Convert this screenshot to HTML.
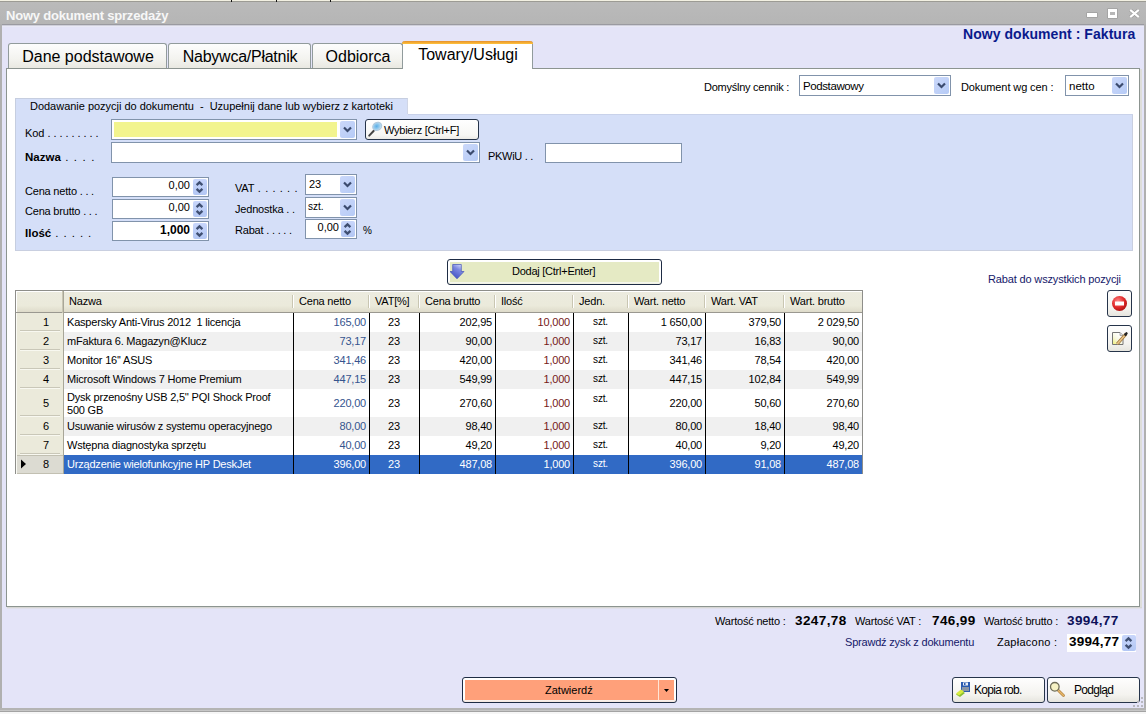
<!DOCTYPE html>
<html><head><meta charset="utf-8">
<style>
*{box-sizing:border-box;margin:0;padding:0}
html,body{width:1146px;height:714px;overflow:hidden;background:#e4e4f8;font-family:"Liberation Sans",sans-serif;font-size:11px;color:#000}
.a{position:absolute}
.t{position:absolute;white-space:pre;line-height:1}
.tab{position:absolute;top:43px;height:26px;border:1px solid #919b9c;border-bottom:none;border-radius:3px 3px 0 0;background:linear-gradient(#fdfdfd,#f3f3ef 60%,#e8e7e0);font-size:16px;text-align:center;line-height:25px;padding-left:1px}
.tab.act{top:41px;height:28px;background:#fff;border-top:none;line-height:28px}
.tab.act:before{content:"";position:absolute;left:-1px;right:-1px;top:0;height:3px;background:linear-gradient(#e58f2c,#ffc43c);border-radius:3px 3px 0 0}
.inp{position:absolute;background:#fff;border:1px solid #8193ab}
.dd{position:absolute;width:15px;border-radius:2px;background:linear-gradient(135deg,#cbd8fa,#b6cbf6)}
.dd svg{position:absolute;left:3px;top:5px}
.spin{position:absolute;width:14px;border-radius:2px;background:linear-gradient(#c8d6fb,#b3c7f4)}
.btn{position:absolute;border:1px solid #26344a;border-radius:3px;background:linear-gradient(#fefefe,#f4f3ef 70%,#e6e5de)}
.c{position:absolute;top:0;white-space:pre;line-height:1;letter-spacing:-0.2px}
</style></head><body>
<div class="a" style="left:0px;top:0px;width:1146px;height:1px;background:#f2f0e2"></div>
<div class="a" style="left:0px;top:1px;width:1146px;height:1px;background:#9c9b94"></div>
<div class="a" style="left:231px;top:0px;width:1px;height:2px;background:#111"></div>
<div class="a" style="left:276px;top:0px;width:1px;height:2px;background:#111"></div>
<div class="a" style="left:330px;top:0px;width:1px;height:2px;background:#111"></div>
<div class="a" style="left:0px;top:2px;width:1146px;height:22px;background:linear-gradient(#bababa,#b5b5b5)"></div>
<div class="a" style="left:0px;top:24px;width:1146px;height:1px;background:#9a9aa0"></div>
<div class="a" style="left:0px;top:25px;width:1146px;height:1px;background:#cfcfdb"></div>
<div class="a" style="left:0px;top:26px;width:1146px;height:1px;background:#e9e9f6"></div>
<div class="t" style="left:6px;top:9px;font-size:13px;font-weight:bold;color:#f7f7f7;letter-spacing:-0.2px">Nowy dokument sprzedaży</div>
<div class="a" style="left:1087px;top:13px;width:10px;height:4px;background:#fff;box-shadow:0 0 0 0.5px rgba(110,110,110,0.5)"></div>
<div class="a" style="left:1108px;top:9px;width:9px;height:9px;border:2px solid #fff;border-top-width:3px;border-bottom-width:3px;box-shadow:0 0 0 0.5px rgba(110,110,110,0.5)"></div>
<svg class="a" style="left:1129px;top:9px" width="11" height="9" viewBox="0 0 11 9"><path d="M1.2 0.8 L9.8 8.2 M9.8 0.8 L1.2 8.2" stroke="#8a8a8a" stroke-width="3.2"/><path d="M1.2 0.8 L9.8 8.2 M9.8 0.8 L1.2 8.2" stroke="#fff" stroke-width="2.2"/></svg>
<div class="a" style="left:0px;top:24px;width:2px;height:690px;background:#b0b0b0"></div>
<div class="a" style="left:1144px;top:24px;width:2px;height:690px;background:#b0b0b0"></div>
<div class="a" style="left:1140px;top:69px;width:2px;height:538px;background:#dededa"></div>
<div class="a" style="left:0px;top:708px;width:1146px;height:2px;background:#b4b4b4"></div>
<div class="a" style="left:0px;top:710px;width:1146px;height:1px;background:#c6c6c6"></div>
<div class="a" style="left:0px;top:711px;width:1146px;height:1px;background:#a3a3a3"></div>
<div class="a" style="left:0px;top:712px;width:1146px;height:2px;background:#f6f6f6"></div>
<div class="t" style="left:963px;top:27px;font-size:14px;font-weight:bold;color:#0a1a8c;letter-spacing:0.05px">Nowy dokument : Faktura</div>
<div class="tab" style="left:8px;width:159px">Dane podstawowe</div>
<div class="tab" style="left:168px;width:143px;letter-spacing:-0.25px">Nabywca/Płatnik</div>
<div class="tab" style="left:312px;width:91px">Odbiorca</div>
<div class="a" style="left:6px;top:68px;width:1134px;height:539px;background:#fff;border:1px solid #8c9490"></div>
<div class="a" style="left:7px;top:607px;width:1135px;height:1px;background:#d6d6d4"></div>
<div class="a" style="left:7px;top:608px;width:1135px;height:1px;background:#e0e0ea"></div>
<div class="tab act" style="left:402px;width:131px">Towary/Usługi</div>
<div class="t" style="left:704px;top:82px;letter-spacing:-0.25px">Domyślny cennik :</div>
<div class="inp" style="left:799px;top:75px;width:152px;height:21px"></div>
<div class="t" style="left:803px;top:81px;font-size:11.5px;letter-spacing:-0.4px">Podstawowy</div>
<div class="dd" style="left:934px;top:77px;height:17px"><svg width="9" height="7" viewBox="0 0 9 7"><path d="M1 1.5 L4.5 5 L8 1.5" fill="none" stroke="#3b4b6e" stroke-width="2.2"/></svg></div>
<div class="t" style="left:961px;top:82px;letter-spacing:-0.1px">Dokument wg cen :</div>
<div class="inp" style="left:1065px;top:75px;width:64px;height:21px"></div>
<div class="t" style="left:1069px;top:81px;font-size:11.5px">netto</div>
<div class="dd" style="left:1112px;top:77px;height:17px"><svg width="9" height="7" viewBox="0 0 9 7"><path d="M1 1.5 L4.5 5 L8 1.5" fill="none" stroke="#3b4b6e" stroke-width="2.2"/></svg></div>
<div class="a" style="left:15px;top:98px;width:393px;height:17px;background:#d5dff8;border-top:1px solid #c6cee0;border-left:1px solid #c6cee0;border-right:1px solid #d0d6e6"></div>
<div class="t" style="left:30px;top:101px;letter-spacing:-0.02px">Dodawanie pozycji do dokumentu  -  Uzupełnij dane lub wybierz z kartoteki</div>
<div class="a" style="left:15px;top:114px;width:1118px;height:137px;background:#d5dff8;border-bottom:1px solid #c9cfe0;border-right:1px solid #c9cfe0;border-left:1px solid #c6cee0"></div>
<div class="a" style="left:408px;top:114px;width:725px;height:1px;background:#c9d2ea"></div>
<div class="t" style="left:25px;top:128px;letter-spacing:-0.05px">Kod . . . . . . . . .</div>
<div class="inp" style="left:111px;top:119px;width:246px;height:21px"></div>
<div class="a" style="left:114px;top:122px;width:223px;height:15px;background:#f2f48e"></div>
<div class="dd" style="left:340px;top:121px;height:17px"><svg width="9" height="7" viewBox="0 0 9 7"><path d="M1 1.5 L4.5 5 L8 1.5" fill="none" stroke="#3b4b6e" stroke-width="2.2"/></svg></div>
<div class="btn" style="left:365px;top:119px;width:114px;height:21px;background:linear-gradient(#fff,#f7f7f4 80%,#ecebe6)"></div>
<svg class="a" style="left:367px;top:121px" width="18" height="17" viewBox="0 0 18 17"><defs><radialGradient id="gl" cx="0.45" cy="0.45" r="0.6"><stop offset="0" stop-color="#5aaee6"/><stop offset="0.7" stop-color="#a8d4f0"/><stop offset="1" stop-color="#d8ecf8"/></radialGradient></defs><path d="M2.2 14.6 L6.8 9.8" stroke="#444" stroke-width="2" stroke-linecap="round"/><ellipse cx="10.2" cy="5.4" rx="4.6" ry="3.9" transform="rotate(-30 10.2 5.4)" fill="url(#gl)" stroke="#b0c8dc" stroke-width="1.2"/></svg>
<div class="t" style="left:384px;top:125px;letter-spacing:-0.25px">Wybierz [Ctrl+F]</div>
<div class="t" style="left:25px;top:152px;font-size:11.5px"><b>Nazwa</b><span style="letter-spacing:1.15px"> . . . .</span></div>
<div class="inp" style="left:111px;top:142px;width:369px;height:21px"></div>
<div class="dd" style="left:463px;top:144px;height:17px"><svg width="9" height="7" viewBox="0 0 9 7"><path d="M1 1.5 L4.5 5 L8 1.5" fill="none" stroke="#3b4b6e" stroke-width="2.2"/></svg></div>
<div class="t" style="left:488px;top:151px;letter-spacing:-0.3px">PKWiU . .</div>
<div class="inp" style="left:545px;top:143px;width:137px;height:20px"></div>
<div class="t" style="left:25px;top:186px;letter-spacing:-0.2px">Cena netto . . .</div>
<div class="t" style="left:25px;top:206px;letter-spacing:-0.2px">Cena brutto . . .</div>
<div class="t" style="left:25px;top:228px;font-size:11.5px"><b>Ilość</b><span style="letter-spacing:0.9px"> . . . . .</span></div>
<div class="inp" style="left:112px;top:177px;width:97px;height:20px"></div>
<div class="inp" style="left:112px;top:199px;width:97px;height:20px"></div>
<div class="inp" style="left:112px;top:221px;width:97px;height:20px"></div>
<div class="t" style="left:140px;top:180px;width:50px;text-align:right">0,00</div>
<div class="t" style="left:140px;top:202px;width:50px;text-align:right">0,00</div>
<div class="t" style="left:140px;top:224px;width:50px;text-align:right;font-weight:bold;font-size:12px">1,000</div>
<div class="spin" style="left:193px;top:179px;height:16px"><svg class="a" style="left:2px;top:1px" width="9" height="14" viewBox="0 0 9 14"><path d="M1.6 5.2 L4.5 2.4 L7.4 5.2 M1.6 8.8 L4.5 11.6 L7.4 8.8" fill="none" stroke="#3f4f72" stroke-width="2.3"/></svg></div>
<div class="spin" style="left:193px;top:201px;height:16px"><svg class="a" style="left:2px;top:1px" width="9" height="14" viewBox="0 0 9 14"><path d="M1.6 5.2 L4.5 2.4 L7.4 5.2 M1.6 8.8 L4.5 11.6 L7.4 8.8" fill="none" stroke="#3f4f72" stroke-width="2.3"/></svg></div>
<div class="spin" style="left:193px;top:223px;height:16px"><svg class="a" style="left:2px;top:1px" width="9" height="14" viewBox="0 0 9 14"><path d="M1.6 5.2 L4.5 2.4 L7.4 5.2 M1.6 8.8 L4.5 11.6 L7.4 8.8" fill="none" stroke="#3f4f72" stroke-width="2.3"/></svg></div>
<div class="t" style="left:235px;top:183px;letter-spacing:-0.2px">VAT<span style="letter-spacing:0.6px"> . . . . . .</span></div>
<div class="t" style="left:235px;top:204px;letter-spacing:-0.2px">Jednostka . .</div>
<div class="t" style="left:235px;top:225px;letter-spacing:-0.2px">Rabat . . . . .</div>
<div class="inp" style="left:305px;top:174px;width:52px;height:21px"></div>
<div class="t" style="left:309px;top:179px;">23</div>
<div class="dd" style="left:340px;top:176px;height:17px"><svg width="9" height="7" viewBox="0 0 9 7"><path d="M1 1.5 L4.5 5 L8 1.5" fill="none" stroke="#3b4b6e" stroke-width="2.2"/></svg></div>
<div class="inp" style="left:305px;top:197px;width:52px;height:21px"></div>
<div class="t" style="left:308px;top:202px;font-size:10px">szt.</div>
<div class="dd" style="left:340px;top:199px;height:17px"><svg width="9" height="7" viewBox="0 0 9 7"><path d="M1 1.5 L4.5 5 L8 1.5" fill="none" stroke="#3b4b6e" stroke-width="2.2"/></svg></div>
<div class="inp" style="left:305px;top:219px;width:52px;height:20px"></div>
<div class="t" style="left:300px;top:222px;width:39px;text-align:right">0,00</div>
<div class="spin" style="left:341px;top:221px;height:16px"><svg class="a" style="left:2px;top:1px" width="9" height="14" viewBox="0 0 9 14"><path d="M1.6 5.2 L4.5 2.4 L7.4 5.2 M1.6 8.8 L4.5 11.6 L7.4 8.8" fill="none" stroke="#3f4f72" stroke-width="2.3"/></svg></div>
<div class="t" style="left:363px;top:226px;font-size:10px">%</div>
<div class="a" style="left:15px;top:290px;width:848px;height:184px;border:1px solid #8e8e8a;border-bottom:none;background:#fff;overflow:hidden">
<div class="a" style="left:0px;top:0px;width:848px;height:21px;background:linear-gradient(#ecebdf,#ebeadb 70%,#dedbca)"></div>
<div class="a" style="left:0px;top:21px;width:848px;height:1px;background:#9a9890"></div>
<div class="a" style="left:0px;top:0px;width:847px;height:1px;background:#fff"></div>
<div class="a" style="left:46px;top:0px;width:1px;height:22px;background:#c9c6b4"></div>
<div class="a" style="left:47px;top:0px;width:1px;height:22px;background:#a8a698"></div>
<div class="c" style="left:53px;top:5px">Nazwa</div>
<div class="a" style="left:276px;top:4px;width:1px;height:13px;background:#c9c6b2"></div>
<div class="a" style="left:277px;top:4px;width:1px;height:13px;background:#fff"></div>
<div class="c" style="left:283px;top:5px">Cena netto</div>
<div class="a" style="left:352px;top:4px;width:1px;height:13px;background:#c9c6b2"></div>
<div class="a" style="left:353px;top:4px;width:1px;height:13px;background:#fff"></div>
<div class="c" style="left:359px;top:5px">VAT[%]</div>
<div class="a" style="left:402px;top:4px;width:1px;height:13px;background:#c9c6b2"></div>
<div class="a" style="left:403px;top:4px;width:1px;height:13px;background:#fff"></div>
<div class="c" style="left:409px;top:5px">Cena brutto</div>
<div class="a" style="left:478px;top:4px;width:1px;height:13px;background:#c9c6b2"></div>
<div class="a" style="left:479px;top:4px;width:1px;height:13px;background:#fff"></div>
<div class="c" style="left:485px;top:5px">Ilość</div>
<div class="a" style="left:556px;top:4px;width:1px;height:13px;background:#c9c6b2"></div>
<div class="a" style="left:557px;top:4px;width:1px;height:13px;background:#fff"></div>
<div class="c" style="left:563px;top:5px">Jedn.</div>
<div class="a" style="left:611px;top:4px;width:1px;height:13px;background:#c9c6b2"></div>
<div class="a" style="left:612px;top:4px;width:1px;height:13px;background:#fff"></div>
<div class="c" style="left:618px;top:5px">Wart. netto</div>
<div class="a" style="left:688px;top:4px;width:1px;height:13px;background:#c9c6b2"></div>
<div class="a" style="left:689px;top:4px;width:1px;height:13px;background:#fff"></div>
<div class="c" style="left:695px;top:5px">Wart. VAT</div>
<div class="a" style="left:767px;top:4px;width:1px;height:13px;background:#c9c6b2"></div>
<div class="a" style="left:768px;top:4px;width:1px;height:13px;background:#fff"></div>
<div class="c" style="left:774px;top:5px">Wart. brutto</div>
<div class="a" style="left:0px;top:22px;width:47px;height:19px;background:#ebeadb"></div>
<div class="a" style="left:4px;top:39px;width:40px;height:1px;background:#c9c7b8"></div>
<div class="a" style="left:4px;top:40px;width:40px;height:1px;background:#f8f8f0"></div>
<div class="a" style="left:47px;top:22px;width:800px;height:19px;background:#fff"></div>
<div class="c" style="left:0;top:26px;width:33px;text-align:right">1</div>
<div class="c" style="left:51px;top:26px;color:#000">Kaspersky Anti-Virus 2012  1 licencja</div>
<div class="c" style="left:277px;top:26px;width:73px;text-align:right;color:#35548e">165,00</div>
<div class="c" style="left:353px;top:26px;width:50px;text-align:center;color:#000">23</div>
<div class="c" style="left:403px;top:26px;width:73px;text-align:right;color:#000">202,95</div>
<div class="c" style="left:479px;top:26px;width:75px;text-align:right;color:#761818">10,000</div>
<div class="c" style="left:557px;top:26px;width:55px;text-align:center;color:#000;font-size:10px">szt.</div>
<div class="c" style="left:612px;top:26px;width:74px;text-align:right;color:#000">1 650,00</div>
<div class="c" style="left:689px;top:26px;width:76px;text-align:right;color:#000">379,50</div>
<div class="c" style="left:768px;top:26px;width:75px;text-align:right;color:#000">2 029,50</div>
<div class="a" style="left:0px;top:41px;width:47px;height:19px;background:#ebeadb"></div>
<div class="a" style="left:4px;top:58px;width:40px;height:1px;background:#c9c7b8"></div>
<div class="a" style="left:4px;top:59px;width:40px;height:1px;background:#f8f8f0"></div>
<div class="a" style="left:47px;top:41px;width:800px;height:19px;background:#f0f0f0"></div>
<div class="c" style="left:0;top:45px;width:33px;text-align:right">2</div>
<div class="c" style="left:51px;top:45px;color:#000">mFaktura 6. Magazyn@Klucz</div>
<div class="c" style="left:277px;top:45px;width:73px;text-align:right;color:#35548e">73,17</div>
<div class="c" style="left:353px;top:45px;width:50px;text-align:center;color:#000">23</div>
<div class="c" style="left:403px;top:45px;width:73px;text-align:right;color:#000">90,00</div>
<div class="c" style="left:479px;top:45px;width:75px;text-align:right;color:#761818">1,000</div>
<div class="c" style="left:557px;top:45px;width:55px;text-align:center;color:#000;font-size:10px">szt.</div>
<div class="c" style="left:612px;top:45px;width:74px;text-align:right;color:#000">73,17</div>
<div class="c" style="left:689px;top:45px;width:76px;text-align:right;color:#000">16,83</div>
<div class="c" style="left:768px;top:45px;width:75px;text-align:right;color:#000">90,00</div>
<div class="a" style="left:0px;top:60px;width:47px;height:19px;background:#ebeadb"></div>
<div class="a" style="left:4px;top:77px;width:40px;height:1px;background:#c9c7b8"></div>
<div class="a" style="left:4px;top:78px;width:40px;height:1px;background:#f8f8f0"></div>
<div class="a" style="left:47px;top:60px;width:800px;height:19px;background:#fff"></div>
<div class="c" style="left:0;top:64px;width:33px;text-align:right">3</div>
<div class="c" style="left:51px;top:64px;color:#000">Monitor 16'' ASUS</div>
<div class="c" style="left:277px;top:64px;width:73px;text-align:right;color:#35548e">341,46</div>
<div class="c" style="left:353px;top:64px;width:50px;text-align:center;color:#000">23</div>
<div class="c" style="left:403px;top:64px;width:73px;text-align:right;color:#000">420,00</div>
<div class="c" style="left:479px;top:64px;width:75px;text-align:right;color:#761818">1,000</div>
<div class="c" style="left:557px;top:64px;width:55px;text-align:center;color:#000;font-size:10px">szt.</div>
<div class="c" style="left:612px;top:64px;width:74px;text-align:right;color:#000">341,46</div>
<div class="c" style="left:689px;top:64px;width:76px;text-align:right;color:#000">78,54</div>
<div class="c" style="left:768px;top:64px;width:75px;text-align:right;color:#000">420,00</div>
<div class="a" style="left:0px;top:79px;width:47px;height:19px;background:#ebeadb"></div>
<div class="a" style="left:4px;top:96px;width:40px;height:1px;background:#c9c7b8"></div>
<div class="a" style="left:4px;top:97px;width:40px;height:1px;background:#f8f8f0"></div>
<div class="a" style="left:47px;top:79px;width:800px;height:19px;background:#f0f0f0"></div>
<div class="c" style="left:0;top:83px;width:33px;text-align:right">4</div>
<div class="c" style="left:51px;top:83px;color:#000">Microsoft Windows 7 Home Premium</div>
<div class="c" style="left:277px;top:83px;width:73px;text-align:right;color:#35548e">447,15</div>
<div class="c" style="left:353px;top:83px;width:50px;text-align:center;color:#000">23</div>
<div class="c" style="left:403px;top:83px;width:73px;text-align:right;color:#000">549,99</div>
<div class="c" style="left:479px;top:83px;width:75px;text-align:right;color:#761818">1,000</div>
<div class="c" style="left:557px;top:83px;width:55px;text-align:center;color:#000;font-size:10px">szt.</div>
<div class="c" style="left:612px;top:83px;width:74px;text-align:right;color:#000">447,15</div>
<div class="c" style="left:689px;top:83px;width:76px;text-align:right;color:#000">102,84</div>
<div class="c" style="left:768px;top:83px;width:75px;text-align:right;color:#000">549,99</div>
<div class="a" style="left:0px;top:98px;width:47px;height:28px;background:#ebeadb"></div>
<div class="a" style="left:4px;top:124px;width:40px;height:1px;background:#c9c7b8"></div>
<div class="a" style="left:4px;top:125px;width:40px;height:1px;background:#f8f8f0"></div>
<div class="a" style="left:47px;top:98px;width:800px;height:28px;background:#fff"></div>
<div class="c" style="left:0;top:107px;width:33px;text-align:right">5</div>
<div class="c" style="left:51px;top:100px;color:#000;line-height:13px">Dysk przenośny USB 2,5'' PQI Shock Proof<br>500 GB</div>
<div class="c" style="left:277px;top:107px;width:73px;text-align:right;color:#35548e">220,00</div>
<div class="c" style="left:353px;top:107px;width:50px;text-align:center;color:#000">23</div>
<div class="c" style="left:403px;top:107px;width:73px;text-align:right;color:#000">270,60</div>
<div class="c" style="left:479px;top:107px;width:75px;text-align:right;color:#761818">1,000</div>
<div class="c" style="left:557px;top:103px;width:55px;text-align:center;color:#000;font-size:10px">szt.</div>
<div class="c" style="left:612px;top:107px;width:74px;text-align:right;color:#000">220,00</div>
<div class="c" style="left:689px;top:107px;width:76px;text-align:right;color:#000">50,60</div>
<div class="c" style="left:768px;top:107px;width:75px;text-align:right;color:#000">270,60</div>
<div class="a" style="left:0px;top:126px;width:47px;height:19px;background:#ebeadb"></div>
<div class="a" style="left:4px;top:143px;width:40px;height:1px;background:#c9c7b8"></div>
<div class="a" style="left:4px;top:144px;width:40px;height:1px;background:#f8f8f0"></div>
<div class="a" style="left:47px;top:126px;width:800px;height:19px;background:#f0f0f0"></div>
<div class="c" style="left:0;top:130px;width:33px;text-align:right">6</div>
<div class="c" style="left:51px;top:130px;color:#000">Usuwanie wirusów z systemu operacyjnego</div>
<div class="c" style="left:277px;top:130px;width:73px;text-align:right;color:#35548e">80,00</div>
<div class="c" style="left:353px;top:130px;width:50px;text-align:center;color:#000">23</div>
<div class="c" style="left:403px;top:130px;width:73px;text-align:right;color:#000">98,40</div>
<div class="c" style="left:479px;top:130px;width:75px;text-align:right;color:#761818">1,000</div>
<div class="c" style="left:557px;top:130px;width:55px;text-align:center;color:#000;font-size:10px">szt.</div>
<div class="c" style="left:612px;top:130px;width:74px;text-align:right;color:#000">80,00</div>
<div class="c" style="left:689px;top:130px;width:76px;text-align:right;color:#000">18,40</div>
<div class="c" style="left:768px;top:130px;width:75px;text-align:right;color:#000">98,40</div>
<div class="a" style="left:0px;top:145px;width:47px;height:19px;background:#ebeadb"></div>
<div class="a" style="left:4px;top:162px;width:40px;height:1px;background:#c9c7b8"></div>
<div class="a" style="left:4px;top:163px;width:40px;height:1px;background:#f8f8f0"></div>
<div class="a" style="left:47px;top:145px;width:800px;height:19px;background:#fff"></div>
<div class="c" style="left:0;top:149px;width:33px;text-align:right">7</div>
<div class="c" style="left:51px;top:149px;color:#000">Wstępna diagnostyka sprzętu</div>
<div class="c" style="left:277px;top:149px;width:73px;text-align:right;color:#35548e">40,00</div>
<div class="c" style="left:353px;top:149px;width:50px;text-align:center;color:#000">23</div>
<div class="c" style="left:403px;top:149px;width:73px;text-align:right;color:#000">49,20</div>
<div class="c" style="left:479px;top:149px;width:75px;text-align:right;color:#761818">1,000</div>
<div class="c" style="left:557px;top:149px;width:55px;text-align:center;color:#000;font-size:10px">szt.</div>
<div class="c" style="left:612px;top:149px;width:74px;text-align:right;color:#000">40,00</div>
<div class="c" style="left:689px;top:149px;width:76px;text-align:right;color:#000">9,20</div>
<div class="c" style="left:768px;top:149px;width:75px;text-align:right;color:#000">49,20</div>
<div class="a" style="left:0px;top:164px;width:47px;height:19px;background:#dcdbd2"></div>
<div class="a" style="left:1px;top:164px;width:46px;height:1px;background:#c2c0b2"></div>
<div class="a" style="left:1px;top:182px;width:46px;height:1px;background:#c2c0b2"></div>
<div class="a" style="left:47px;top:164px;width:800px;height:19px;background:#316ac5"></div>
<div class="c" style="left:0;top:168px;width:33px;text-align:right">8</div>
<svg class="a" style="left:5px;top:168px" width="6" height="10" viewBox="0 0 6 10"><path d="M0 0.5 L5 5 L0 9.5Z" fill="#000"/></svg>
<div class="c" style="left:51px;top:168px;color:#fff">Urządzenie wielofunkcyjne HP DeskJet</div>
<div class="c" style="left:277px;top:168px;width:73px;text-align:right;color:#fff">396,00</div>
<div class="c" style="left:353px;top:168px;width:50px;text-align:center;color:#fff">23</div>
<div class="c" style="left:403px;top:168px;width:73px;text-align:right;color:#fff">487,08</div>
<div class="c" style="left:479px;top:168px;width:75px;text-align:right;color:#fff">1,000</div>
<div class="c" style="left:557px;top:168px;width:55px;text-align:center;color:#fff;font-size:10px">szt.</div>
<div class="c" style="left:612px;top:168px;width:74px;text-align:right;color:#fff">396,00</div>
<div class="c" style="left:689px;top:168px;width:76px;text-align:right;color:#fff">91,08</div>
<div class="c" style="left:768px;top:168px;width:75px;text-align:right;color:#fff">487,08</div>
<div class="a" style="left:47px;top:22px;width:1px;height:162px;background:#a8a698"></div>
<div class="a" style="left:277px;top:22px;width:1px;height:162px;background:#000"></div>
<div class="a" style="left:353px;top:22px;width:1px;height:162px;background:#000"></div>
<div class="a" style="left:403px;top:22px;width:1px;height:162px;background:#000"></div>
<div class="a" style="left:479px;top:22px;width:1px;height:162px;background:#000"></div>
<div class="a" style="left:557px;top:22px;width:1px;height:162px;background:#000"></div>
<div class="a" style="left:612px;top:22px;width:1px;height:162px;background:#000"></div>
<div class="a" style="left:689px;top:22px;width:1px;height:162px;background:#000"></div>
<div class="a" style="left:768px;top:22px;width:1px;height:162px;background:#000"></div>
<div class="a" style="left:846px;top:22px;width:1px;height:162px;background:#000"></div>
<div class="a" style="left:0px;top:0px;width:1px;height:21px;background:#fff"></div>
<div class="a" style="left:0px;top:22px;width:1px;height:162px;background:#fafaf4"></div>
</div>
<div class="btn" style="left:447px;top:259px;width:215px;height:26px;background:linear-gradient(#fff 85%,#eef0e0);border-color:#1e2c44"></div>
<div class="a" style="left:450px;top:262px;width:209px;height:20px;background:#e5eac4"></div>
<svg class="a" style="left:450px;top:264px" width="16" height="16" viewBox="0 0 16 16"><defs><linearGradient id="ga" x1="0.8" y1="0" x2="0.2" y2="1"><stop offset="0" stop-color="#d4dcff"/><stop offset="0.35" stop-color="#7c88e0"/><stop offset="1" stop-color="#3848c0"/></linearGradient></defs><path d="M2.7 0.5 H11.3 V7.5 H14 L7 14.8 L0 7.5 H2.7 Z" fill="url(#ga)" stroke="#4050b8" stroke-width="0.7"/></svg>
<div class="t" style="left:512px;top:266px;letter-spacing:-0.25px">Dodaj [Ctrl+Enter]</div>
<div class="t" style="left:988px;top:274px;color:#15186a;letter-spacing:-0.15px">Rabat do wszystkich pozycji</div>
<div class="btn" style="left:1107px;top:290px;width:25px;height:27px"></div>
<svg class="a" style="left:1111px;top:295px" width="17" height="17" viewBox="0 0 17 17"><defs><radialGradient id="gr" cx="0.4" cy="0.35" r="0.7"><stop offset="0" stop-color="#ff8a8a"/><stop offset="0.6" stop-color="#e02828"/><stop offset="1" stop-color="#a81010"/></radialGradient></defs><circle cx="8.5" cy="8.5" r="7.5" fill="url(#gr)"/><rect x="4" y="6.5" width="9" height="4" fill="#fff"/></svg>
<div class="btn" style="left:1107px;top:325px;width:25px;height:27px"></div>
<svg class="a" style="left:1110px;top:329px" width="19" height="19" viewBox="0 0 19 19"><defs><linearGradient id="gn" x1="0" y1="1" x2="0.7" y2="0.2"><stop offset="0" stop-color="#eef070"/><stop offset="0.55" stop-color="#f8f8e0"/><stop offset="1" stop-color="#fff"/></linearGradient></defs><path d="M2.5 3.5 H10 L13 6.5 V15.5 H2.5 Z" fill="url(#gn)" stroke="#747474" stroke-width="1"/><path d="M10 3.5 V6.5 H13" fill="#ddd" stroke="#999" stroke-width="0.8"/><path d="M7.2 15 L16 5" stroke="#a07838" stroke-width="3.2" stroke-linecap="butt"/><path d="M7.2 15 L16 5" stroke="#eac48a" stroke-width="1.6"/><path d="M15.4 5.6 L16.4 4.5" stroke="#222" stroke-width="2.6" stroke-linecap="round"/></svg>
<div class="t" style="left:715px;top:616px;letter-spacing:-0.2px">Wartość netto :</div>
<div class="t" style="left:795px;top:614px;font-size:13.5px;font-weight:bold;letter-spacing:0.4px">3247,78</div>
<div class="t" style="left:855px;top:616px;letter-spacing:-0.2px">Wartość VAT :</div>
<div class="t" style="left:932px;top:614px;font-size:13.5px;font-weight:bold;letter-spacing:0.4px">746,99</div>
<div class="t" style="left:984px;top:616px;letter-spacing:-0.2px">Wartość brutto :</div>
<div class="t" style="left:1067px;top:614px;font-size:13.5px;font-weight:bold;color:#0c1058;letter-spacing:0.4px">3994,77</div>
<div class="t" style="left:845px;top:637px;color:#15186a;letter-spacing:-0.2px">Sprawdź zysk z dokumentu</div>
<div class="t" style="left:997px;top:637px;letter-spacing:0.25px">Zapłacono :</div>
<div class="a" style="left:1067px;top:634px;width:69px;height:18px;background:#fff"></div>
<div class="t" style="left:1069px;top:635px;font-size:13.5px;font-weight:bold;letter-spacing:0.2px">3994,77</div>
<div class="spin" style="left:1122px;top:635px;height:16px"><svg class="a" style="left:2px;top:1px" width="9" height="14" viewBox="0 0 9 14"><path d="M1.6 5.2 L4.5 2.4 L7.4 5.2 M1.6 8.8 L4.5 11.6 L7.4 8.8" fill="none" stroke="#3f4f72" stroke-width="2.3"/></svg></div>
<div class="btn" style="left:462px;top:677px;width:215px;height:26px;background:linear-gradient(#fff 85%,#f4e4dc);border-color:#1e2c44"></div>
<div class="a" style="left:465px;top:680px;width:209px;height:20px;background:#ffa07a"></div>
<div class="a" style="left:658px;top:680px;width:1px;height:20px;background:#ffe6d6"></div>
<svg class="a" style="left:664px;top:689px" width="5" height="3" viewBox="0 0 5 3"><path d="M0 0 H5 L2.5 3Z" fill="#000"/></svg>
<div class="t" style="left:545px;top:685px;">Zatwierdź</div>
<div class="btn" style="left:952px;top:677px;width:93px;height:26px"></div>
<svg class="a" style="left:955px;top:681px" width="18" height="18" viewBox="0 0 18 18"><path d="M6 1 H15 V11 H7 L6 10 Z" fill="#2c5cb0"/><rect x="8" y="1.5" width="5" height="3" fill="#e8eef8"/><rect x="9" y="2" width="1.5" height="2" fill="#2c5cb0"/><rect x="7" y="6" width="7" height="4" fill="#8a96a6"/><path d="M1 13.5 L6 9.5 L10 12 L5 16 Z" fill="#8cc030"/><path d="M1 12.5 L6 8.5 L9 10.5 L4 14.5 Z" fill="#d8ec40"/></svg>
<div class="t" style="left:974px;top:684px;font-size:12px;letter-spacing:-0.7px">Kopia rob.</div>
<div class="btn" style="left:1047px;top:677px;width:93px;height:26px"></div>
<svg class="a" style="left:1049px;top:680px" width="20" height="20" viewBox="0 0 20 20"><path d="M9.2 10.2 L14.5 15.5" stroke="#b08040" stroke-width="2.8" stroke-linecap="round"/><path d="M9.2 10.2 L14.5 15.5" stroke="#e8b868" stroke-width="1.4" stroke-linecap="round"/><circle cx="5.8" cy="6.8" r="4.3" fill="#f6f2c4" stroke="#6e6c58" stroke-width="1.3"/></svg>
<div class="a" style="left:1141px;top:697px;width:2px;height:2px;background:#b8b8c0"></div>
<div class="a" style="left:1141px;top:701px;width:2px;height:2px;background:#b8b8c0"></div>
<div class="a" style="left:1141px;top:705px;width:2px;height:2px;background:#b8b8c0"></div>
<div class="a" style="left:1137px;top:701px;width:2px;height:2px;background:#b8b8c0"></div>
<div class="a" style="left:1137px;top:705px;width:2px;height:2px;background:#b8b8c0"></div>
<div class="a" style="left:1133px;top:705px;width:2px;height:2px;background:#b8b8c0"></div>
<div class="t" style="left:1074px;top:684px;font-size:12px;letter-spacing:-0.7px">Podgląd</div>
</body></html>
